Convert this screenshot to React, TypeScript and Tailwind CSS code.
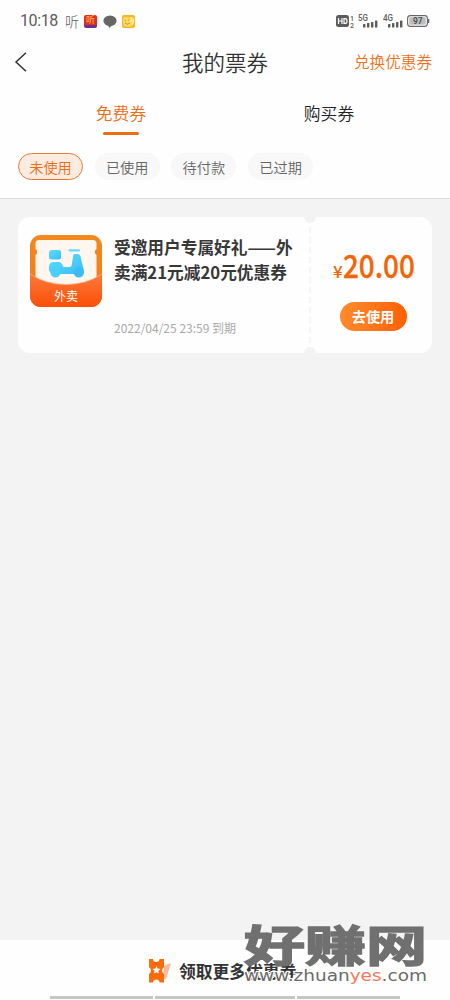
import { clsx } from 'clsx'

const tabs = [
  { key: 'free', label: '免费券' },
  { key: 'bought', label: '购买券' },
]

const filters = ['未使用', '已使用', '待付款', '已过期']
const activeTab = 'free'
const activeFilter = '未使用'

function Signal({ label }: { label: string }) {
  return (
    <svg width="20" height="14" viewBox="0 0 20 14" fill="#5c5c5c">
      <text x="0" y="6.5" fontSize="8.5" fontWeight="500" fontFamily="Roboto, sans-serif" textLength="10" lengthAdjust="spacingAndGlyphs">{label}</text>
      <rect x="5" y="10" width="2.4" height="3.5" rx="0.6" />
      <rect x="9" y="9" width="2.4" height="4.5" rx="0.6" />
      <rect x="13" y="8" width="2.4" height="5.5" rx="0.6" />
      <rect x="17" y="6.5" width="2.4" height="7" rx="0.6" />
    </svg>
  )
}

function StatusBar() {
  return (
    <div className="flex h-[42px] items-center justify-between pr-5 pl-5 text-[#5c5c5c]">
      <div className="flex items-center">
        <span className="w-[38px] font-[Roboto,sans-serif] text-[16px] leading-none tracking-[-0.4px]">10:18</span>
        <span className="ml-[7px] w-[14px] text-[14px] leading-none font-light">听</span>
        <span className="ml-[5px] flex h-[13px] w-[13px] items-center justify-center rounded-[2px] border-b-3 border-[#673092] bg-[#e52c1d] text-[9px] leading-none text-[#ffc45b]">听</span>
        <svg className="ml-[6px]" width="14" height="13" viewBox="0 0 14 13" fill="#666">
          <ellipse cx="7" cy="5.8" rx="6.6" ry="5.2" />
          <path d="M4.500 9.500h5L6.500 13z" />
        </svg>
        <svg className="ml-[5px]" width="13" height="13" viewBox="0 0 13 13">
          <rect width="13" height="13" rx="2" fill="#f8b62b" />
          <path d="M1 3.500Q4 1 7 3q3-2 5 .5v5Q10 12 6 12T1 8.500z" fill="#ffdd63" />
          <path d="M2.500 5l1.500 1M6 5.500l1.500-1M3 8q2 2.500 5 0" stroke="#e77424" fill="none" strokeWidth="0.900" />
          <path d="M9.500 2l-1 4 3-1-1 4" stroke="#fff3b0" fill="none" />
        </svg>
      </div>
      <div className="flex items-center">
        <svg width="19" height="14" viewBox="0 0 19 14" fill="#5c5c5c" fontFamily="Roboto, sans-serif">
          <rect x="1" y="1" width="13" height="12" rx="2.5" />
          <path d="M3.500 4v6M3.500 7H7M7 4v6M9 4.600h1.500q1.500 0 1.500 2.400t-1.500 2.400H9z" stroke="#fff" strokeWidth="1.200" fill="none" />
          <text x="15" y="6.5" fontSize="7" fontWeight="500">1</text>
          <text x="15" y="13.5" fontSize="7" fontWeight="500">2</text>
        </svg>
        <span className="ml-[4px]"><Signal label="5G" /></span>
        <span className="ml-[5px]"><Signal label="4G" /></span>
        <svg className="ml-[4px]" width="23" height="12" viewBox="0 0 23 12">
          <rect x="0.6" y="0.6" width="19.8" height="10.8" rx="2.8" fill="#fff" stroke="#666" strokeWidth="1.1" />
          <rect x="2.2" y="2.2" width="16.6" height="7.6" rx="1.3" fill="#bdbdbd" />
          <path d="M21.600 4v4" stroke="#666" strokeWidth="1.400" />
          <text x="10.8" y="9.2" fontSize="8.5" fontWeight="500" textAnchor="middle" fill="#444" fontFamily="Roboto, sans-serif">97</text>
        </svg>
      </div>
    </div>
  )
}

function TakeoutIcon() {
  return (
    <svg className="shrink-0" width="72" height="72" viewBox="0 0 72 72">
      <defs>
        <linearGradient id="frame" x1="0" y1="0" x2="0" y2="1">
          <stop offset="0" stopColor="#f28a1e" />
          <stop offset="1" stopColor="#f5761a" />
        </linearGradient>
        <linearGradient id="pocket" x1="0" y1="0" x2="0" y2="1">
          <stop offset="0" stopColor="#fb7a3c" />
          <stop offset="1" stopColor="#fb4f06" />
        </linearGradient>
        <linearGradient id="bike" x1="0" y1="0" x2="1" y2="1">
          <stop offset="0" stopColor="#5ce0f8" />
          <stop offset="1" stopColor="#3abcfa" />
        </linearGradient>
        <clipPath id="tile"><rect width="72" height="72" rx="11" /></clipPath>
      </defs>
      <g clipPath="url(#tile)">
        <rect width="72" height="72" fill="url(#frame)" />
        <path d="M9 5h54q3.500 0 3.500 3.500V14a3.500 3.500 0 0 0 0 6v32H5.500V20a3.500 3.500 0 0 0 0-6V8.500Q5.500 5 9 5z" fill="#fff6ef" />
        <rect x="19" y="15" width="12" height="9.5" rx="2.5" fill="url(#bike)" />
        <path d="M39.500 15.300h9.500" stroke="#62dcf8" strokeWidth="2.200" strokeLinecap="round" />
        <path d="M43.500 19h4q2.500 0 3 2.500L54 36l-4 3H25l-6-3v-4q0-5 5-5h5q2 0 3 2l1.500 3h6q2 0 2.200-2z" fill="url(#bike)" />
        <circle cx="25.500" cy="37.200" r="5.200" fill="#48d0fb" />
        <circle cx="48.800" cy="37.200" r="5.200" fill="#38bcfb" />
        <path d="M0 39Q16 49.500 36 49.500T72 39v33H0z" fill="url(#pocket)" />
        <path d="M0 39Q16 49.500 36 49.500T72 39" stroke="#ffb588" strokeWidth="0.700" fill="none" />
      </g>
      <text x="36" y="66" textAnchor="middle" fontSize="12" fill="#fff">外卖</text>
    </svg>
  )
}

function CouponCard() {
  return (
    <div className="relative mx-[18px] mt-[18px] flex h-[136px] overflow-hidden rounded-[12px] bg-[#fefefe]">
      <div className="flex w-[291px] pt-[18px] pl-3">
        <TakeoutIcon />
        <div className="ml-3 flex flex-col">
          <h2 className="text-[16.700px] leading-[25px] font-bold whitespace-nowrap text-[#383838]">
            受邀用户专属好礼<span className="inline-block w-[28.500px]">——</span>外
            <br />
            卖满21元减20元优惠券
          </h2>
          <p className="mt-[34px] text-[12px] leading-[18px] whitespace-nowrap text-[#aaa]">2022/04/25 23:59 到期</p>
        </div>
      </div>
      <div className="flex flex-1 flex-col items-center border-l-2 border-dashed border-[#f5f5f5] pl-[3px]">
        <div className="mt-[26px] flex h-[42px] w-[80px] items-baseline text-[#f46407]">
          <span className="w-[10px] text-[17px] leading-[42px] font-medium">¥</span>
          <span className="origin-left scale-x-[0.870] text-[32px] leading-[42px] font-medium [-webkit-text-stroke:0.300px_#f46407]">20.00</span>
        </div>
        <button className="mt-[17px] h-[29px] w-[67px] rounded-full bg-linear-to-r from-[#ff8a2c] to-[#ff6000] text-[14.200px] leading-[29px] font-bold text-white">去使用</button>
      </div>
      <i className="absolute -top-[6px] left-[286px] h-3 w-3 rounded-full bg-[#f3f3f3]" />
      <i className="absolute -bottom-[6px] left-[286px] h-3 w-3 rounded-full bg-[#f3f3f3]" />
    </div>
  )
}

function Watermark() {
  return (
    <div className="absolute top-[922px] left-[244px] h-[66px] w-[190px] text-[#707070]">
      <div className="h-[43px] w-[129px] origin-left scale-x-[1.420] text-[43px] leading-[43px] font-bold whitespace-nowrap [-webkit-text-stroke:1.500px_#707070]">好赚网</div>
      <svg className="absolute top-[44px] left-0 overflow-visible" width="186" height="22" fontFamily="'DejaVu Sans', sans-serif" fontSize="15" fill="#6a6a6a" stroke="#fff" strokeWidth="2" paintOrder="stroke">
        <text x="0" y="15" textLength="183" lengthAdjust="spacingAndGlyphs">
          www.zhuan<tspan fill="#f5785a">yes</tspan>.com
        </text>
      </svg>
    </div>
  )
}

export default function App() {
  return (
    <div className="relative flex h-[1000px] w-[450px] flex-col overflow-hidden bg-[#f3f3f3] font-['Noto_Sans_CJK_SC',sans-serif]">
      <header className="h-[199px] border-b border-[#dedede] bg-[#fefefe]">
        <StatusBar />
        <div className="grid h-[40px] grid-cols-[1fr_auto_1fr] items-center px-[14px]">
          <svg width="14" height="20" viewBox="0 0 14 20" fill="none" stroke="#333" strokeWidth="1.500">
            <path d="M12 .8L2 10l10 9.200" />
          </svg>
          <h1 className="text-[21.500px] leading-[40px] font-[350] text-[#333]">我的票券</h1>
          <a className="mr-[4px] text-right text-[15.600px] font-[350] text-[#ef7119]">兑换优惠券</a>
        </div>

        {/* Tabs */}
        <nav className="grid h-[64px] grid-cols-2 px-[17px]">
          {tabs.map(({ key, label }) => (
            <div key={key} className={clsx('flex flex-col items-center pt-[18px] text-[16.800px] leading-[26px] font-[350]', key === activeTab ? 'text-[#ec6d16]' : 'text-[#222]')}>
              {label}
              {key === activeTab && <span className="mt-[6px] h-[3px] w-[36px] rounded-full bg-[#ec6d16]" />}
            </div>
          ))}
        </nav>

        {/* Filters */}
        <div className="mt-[7px] flex gap-[11.700px] pl-[18px]">
          {filters.map((name) => (
            <span
              key={name}
              className={clsx(
                'h-[27px] w-[65px] rounded-full border text-center text-[14.200px] leading-[26px] font-[350]',
                name === activeFilter ? 'border-[#e87a38] bg-[#fdebe0] text-[#ec6d16]' : 'border-[#f7f7f7] bg-[#f8f8f8] text-[#666]'
              )}
            >
              {name}
            </span>
          ))}
        </div>
      </header>

      <main className="flex-1">
        <CouponCard />
      </main>

      <footer className="flex h-[60px] flex-col bg-[#fefefe]">
        <div className="flex h-[56px] items-center pt-[6px] pl-[149px]">
          <svg width="23" height="24" viewBox="0 0 23 24">
            <path d="M15 7l7-3-5 16h-3z" fill="#ffb996" />
            <path d="M0 0h4a3.200 3 0 0 0 6.500 0H15v8q-2 1.500-2 3.500t2 3.500v8.500h-4.500a3.200 3 0 0 0-6.500 0H0V15q2-1.500 2-3.500T0 8z" fill="#fb6a0b" />
            <path d="M7.500 7l1.200 2.600 2.800.3-2.100 1.900.6 2.800-2.500-1.400L5 14.600l.6-2.800-2.100-1.900 2.800-.3z" fill="#fff" />
          </svg>
          <span className="ml-[7px] text-[16.800px] leading-[24px] font-bold text-[#333]">领取更多优惠券</span>
        </div>
        <div className="flex justify-center gap-[2px]">
          <i className="h-[3px] w-[103px] bg-[#c5c5c5]" />
          <i className="h-[3px] w-[140px] bg-[#c5c5c5]" />
          <i className="h-[3px] w-[103px] bg-[#c5c5c5]" />
        </div>
      </footer>

      <Watermark />
    </div>
  )
}
